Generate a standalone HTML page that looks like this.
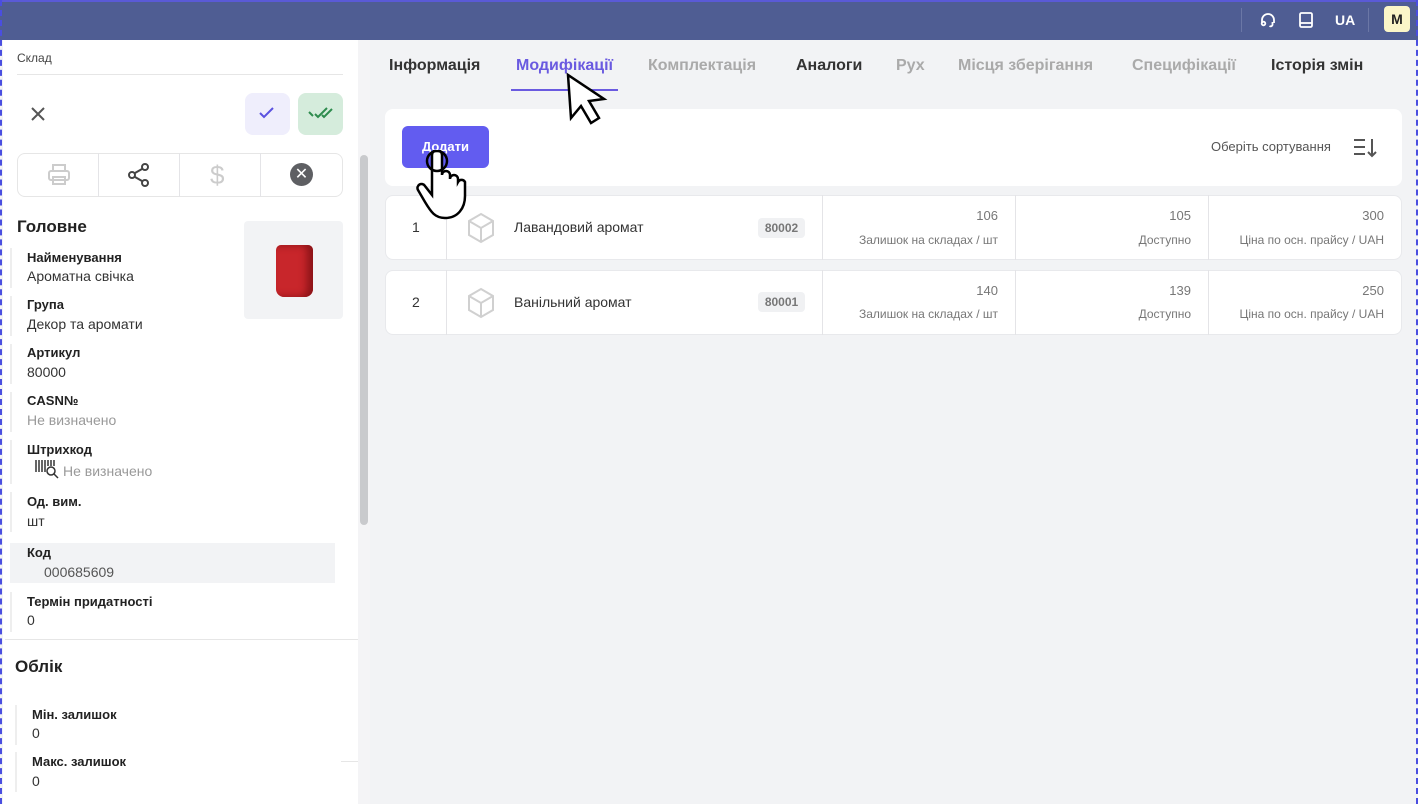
<!DOCTYPE html>
<html><head><meta charset="utf-8"><style>
*{box-sizing:border-box;margin:0;padding:0}
body{width:1418px;height:804px;overflow:hidden;font-family:"Liberation Sans",sans-serif;background:#f2f3f5;position:relative;color:#222}
.abs{position:absolute}
.hdr{left:0;top:0;width:1418px;height:40px;background:#4f5d93;border-top:2px solid #5a5ad6}
.lb{left:0;top:0;width:3px;height:804px;border-left:2px dashed #4a4ee0}
.rb{right:0;top:0;width:3px;height:804px;border-right:2px dashed #4a4ee0}
.side{left:3px;top:40px;width:355px;height:764px;background:#fff}
.sb{left:360px;top:155px;width:8px;height:370px;background:#c9cacd;border-radius:4px}
.sbt{left:358px;top:40px;width:12px;height:764px;background:#f4f4f6}
.lbl{font-size:13px;font-weight:bold;color:#222}
.val{font-size:14px;color:#333}
.g{color:#999}
.tab{top:57px;font-size:16px;font-weight:bold}
.card{background:#fff;border-radius:8px;border:1px solid #e8e9ec}
.num{font-size:13px;color:#777;text-align:right}
.sub{font-size:12px;color:#777;text-align:right}
.vl{width:1px;background:#e4e4e7}
.bar{width:2px;background:#eee}
</style></head><body>
<div class="abs hdr"></div>
<div class="abs" style="left:1241px;top:8px;width:1px;height:24px;background:#6b77a6"></div>
<div class="abs" style="left:1368px;top:8px;width:1px;height:24px;background:#6b77a6"></div>
<svg class="abs" style="left:1259px;top:11px" width="18" height="18" viewBox="0 0 18 18" fill="none" stroke="#fff" stroke-width="1.8"><path d="M3 12V9a6 6 0 0 1 12 0v3"/><circle cx="4.5" cy="12.5" r="1.8"/><path d="M13.5 11v3a2 2 0 0 1-3 1"/></svg>
<svg class="abs" style="left:1298px;top:11px" width="16" height="18" viewBox="0 0 16 18" fill="none" stroke="#fff" stroke-width="1.8"><rect x="2" y="2" width="12" height="14" rx="1.5"/><path d="M2 12h12"/></svg>
<div class="abs" style="left:1335px;top:12px;color:#fff;font-weight:bold;font-size:14px">UA</div>
<div class="abs" style="left:1384px;top:6px;width:26px;height:26px;background:#fbf6c8;border-radius:4px;font-weight:bold;font-size:14px;text-align:center;line-height:26px">M</div>
<div class="abs side"></div>
<div class="abs sbt"></div><div class="abs sb"></div>
<div class="abs" style="left:17px;top:51px;font-size:12px;color:#444">Склад</div>
<div class="abs" style="left:17px;top:74px;width:326px;height:1px;background:#e6e6e6"></div>
<svg class="abs" style="left:30px;top:106px" width="16" height="16" stroke="#555" stroke-width="2"><path d="M2 2l12 12M14 2L2 14"/></svg>
<div class="abs" style="left:245px;top:93px;width:45px;height:42px;background:#efeefc;border-radius:8px"></div>
<svg class="abs" style="left:258px;top:106px" width="18" height="14" fill="none" stroke="#5b52e0" stroke-width="2"><path d="M2 7l4 4 9-9"/></svg>
<div class="abs" style="left:298px;top:93px;width:45px;height:42px;background:#d5ecdc;border-radius:8px"></div>
<svg class="abs" style="left:308px;top:106px" width="26" height="14" fill="none" stroke="#2e8c4e" stroke-width="2"><path d="M1 6l4 4M7 8l3 3 9-9M14 9l2 2 8-8"/></svg>
<div class="abs" style="left:17px;top:153px;width:326px;height:44px;border:1px solid #e6e6e6;border-radius:8px"></div>
<div class="abs vl" style="left:98px;top:153px;height:44px"></div><div class="abs vl" style="left:179px;top:153px;height:44px"></div><div class="abs vl" style="left:260px;top:153px;height:44px"></div>
<svg class="abs" style="left:46px;top:162px" width="26" height="26" fill="none" stroke="#ccc" stroke-width="2"><rect x="7" y="3" width="12" height="6"/><rect x="3" y="9" width="20" height="9" rx="2"/><rect x="7" y="15" width="12" height="7"/></svg>
<svg class="abs" style="left:126px;top:162px" width="26" height="26" fill="none" stroke="#444" stroke-width="2"><circle cx="19" cy="5" r="3"/><circle cx="6" cy="13" r="3"/><circle cx="19" cy="21" r="3"/><path d="M9 11l7-4M9 15l7 4"/></svg>
<div class="abs" style="left:210px;top:160px;font-size:26px;color:#ccc">$</div>
<div class="abs" style="left:290px;top:163px;width:23px;height:23px;border-radius:50%;background:#5e5f63;color:#fff;text-align:center;line-height:23px;font-size:16px">✕</div>
<div class="abs" style="left:17px;top:217px;font-size:17px;font-weight:bold">Головне</div>
<div class="abs" style="left:244px;top:221px;width:99px;height:98px;background:#f2f3f5;border-radius:4px"></div>
<div class="abs" style="left:276px;top:245px;width:37px;height:52px;background:#c8262b;border-radius:5px 5px 8px 8px;box-shadow:inset -6px 0 8px #8c1418"></div>
<div class="abs bar" style="left:10px;top:248px;height:40px"></div>
<div class="abs bar" style="left:10px;top:296px;height:40px"></div>
<div class="abs bar" style="left:10px;top:344px;height:40px"></div>
<div class="abs bar" style="left:10px;top:392px;height:40px"></div>
<div class="abs bar" style="left:10px;top:440px;height:44px"></div>
<div class="abs bar" style="left:10px;top:492px;height:40px"></div>
<div class="abs bar" style="left:10px;top:592px;height:40px"></div>
<div class="abs bar" style="left:15px;top:705px;height:40px"></div>
<div class="abs bar" style="left:15px;top:752px;height:40px"></div>
<div class="abs lbl" style="left:27px;top:250px">Найменування</div><div class="abs val" style="left:27px;top:268px">Ароматна свічка</div>
<div class="abs lbl" style="left:27px;top:297px">Група</div><div class="abs val" style="left:27px;top:316px">Декор та аромати</div>
<div class="abs lbl" style="left:27px;top:345px">Артикул</div><div class="abs val" style="left:27px;top:364px">80000</div>
<div class="abs lbl" style="left:27px;top:393px">CASN№</div><div class="abs val g" style="left:27px;top:412px">Не визначено</div>
<div class="abs lbl" style="left:27px;top:442px">Штрихкод</div>
<svg class="abs" style="left:35px;top:459px" width="28" height="22" fill="none" stroke="#333" stroke-width="1.5"><path d="M1 1v12M4 1v12M7 1v12M10 1v12M13 1v6M16 1v6M19 1v6"/><circle cx="16" cy="12" r="4"/><path d="M19 15l4 4"/></svg>
<div class="abs val g" style="left:63px;top:463px">Не визначено</div>
<div class="abs lbl" style="left:27px;top:494px">Од. вим.</div><div class="abs val" style="left:27px;top:513px">шт</div>
<div class="abs" style="left:10px;top:543px;width:325px;height:40px;background:#f2f3f5"></div>
<div class="abs lbl" style="left:27px;top:545px">Код</div><div class="abs val" style="left:44px;top:564px;color:#555">000685609</div>
<div class="abs lbl" style="left:27px;top:594px">Термін придатності</div><div class="abs val" style="left:27px;top:612px">0</div>
<div class="abs" style="left:5px;top:639px;width:353px;height:1px;background:#e6e6e6"></div>
<div class="abs" style="left:15px;top:657px;font-size:17px;font-weight:bold">Облік</div>
<div class="abs lbl" style="left:32px;top:707px">Мін. залишок</div><div class="abs val" style="left:32px;top:725px">0</div>
<div class="abs lbl" style="left:32px;top:754px">Макс. залишок</div><div class="abs val" style="left:32px;top:773px">0</div>
<div class="abs" style="left:341px;top:761px;width:17px;height:1px;background:#e6e6e6"></div>
<div class="abs tab" style="left:389px;color:#333">Інформація</div>
<div class="abs tab" style="left:516px;color:#6a5ae0">Модифікації</div>
<div class="abs" style="left:511px;top:89px;width:107px;height:2px;background:#6a5ae0"></div>
<div class="abs tab" style="left:648px;color:#aaa">Комплектація</div>
<div class="abs tab" style="left:796px;color:#333">Аналоги</div>
<div class="abs tab" style="left:896px;color:#aaa">Рух</div>
<div class="abs tab" style="left:958px;color:#aaa">Місця зберігання</div>
<div class="abs tab" style="left:1132px;color:#aaa">Специфікації</div>
<div class="abs tab" style="left:1271px;color:#333">Історія змін</div>
<div class="abs card" style="left:385px;top:109px;width:1017px;height:77px;border:none"></div>
<div class="abs" style="left:402px;top:126px;width:87px;height:42px;background:#625cf0;border-radius:6px;color:#fff;font-size:13px;font-weight:bold;text-align:center;line-height:42px">Додати</div>
<div class="abs" style="left:1211px;top:139px;font-size:13px;color:#555">Оберіть сортування</div>
<svg class="abs" style="left:1353px;top:137px" width="24" height="22" stroke="#555" stroke-width="2"><path d="M1 3h11M1 10h11M1 17h11M19 2v17M15 15l4 4 4-4" fill="none"/></svg>
<div class="abs card" style="left:385px;top:195px;width:1017px;height:65px"></div>
<div class="abs card" style="left:385px;top:270px;width:1017px;height:65px"></div>
<div class="abs vl" style="left:446px;top:195px;height:65px"></div><div class="abs vl" style="left:822px;top:195px;height:65px"></div><div class="abs vl" style="left:1015px;top:195px;height:65px"></div><div class="abs vl" style="left:1208px;top:195px;height:65px"></div>
<div class="abs vl" style="left:446px;top:270px;height:65px"></div><div class="abs vl" style="left:822px;top:270px;height:65px"></div><div class="abs vl" style="left:1015px;top:270px;height:65px"></div><div class="abs vl" style="left:1208px;top:270px;height:65px"></div>
<div class="abs val" style="left:412px;top:219px">1</div><div class="abs val" style="left:412px;top:294px">2</div>
<svg class="abs" style="left:466px;top:212px" width="30" height="32" fill="none" stroke="#d0d0d0" stroke-width="2"><path d="M15 2l12 7v14l-12 7-12-7V9z M3 9l12 7 12-7M15 16v14"/></svg>
<svg class="abs" style="left:466px;top:287px" width="30" height="32" fill="none" stroke="#d0d0d0" stroke-width="2"><path d="M15 2l12 7v14l-12 7-12-7V9z M3 9l12 7 12-7M15 16v14"/></svg>
<div class="abs val" style="left:514px;top:219px">Лавандовий аромат</div><div class="abs val" style="left:514px;top:294px">Ванільний аромат</div>
<div class="abs" style="left:758px;top:218px;width:47px;height:20px;background:#f0f1f3;border-radius:4px;font-size:12px;font-weight:bold;color:#777;text-align:center;line-height:20px">80002</div>
<div class="abs" style="left:758px;top:292px;width:47px;height:20px;background:#f0f1f3;border-radius:4px;font-size:12px;font-weight:bold;color:#777;text-align:center;line-height:20px">80001</div>
<div class="abs num" style="left:830px;top:208px;width:168px">106</div><div class="abs sub" style="left:830px;top:233px;width:168px">Залишок на складах / шт</div>
<div class="abs num" style="left:1023px;top:208px;width:168px">105</div><div class="abs sub" style="left:1023px;top:233px;width:168px">Доступно</div>
<div class="abs num" style="left:1216px;top:208px;width:168px">300</div><div class="abs sub" style="left:1210px;top:233px;width:174px">Ціна по осн. прайсу / UAH</div>
<div class="abs num" style="left:830px;top:283px;width:168px">140</div><div class="abs sub" style="left:830px;top:307px;width:168px">Залишок на складах / шт</div>
<div class="abs num" style="left:1023px;top:283px;width:168px">139</div><div class="abs sub" style="left:1023px;top:307px;width:168px">Доступно</div>
<div class="abs num" style="left:1216px;top:283px;width:168px">250</div><div class="abs sub" style="left:1210px;top:307px;width:174px">Ціна по осн. прайсу / UAH</div>
<svg class="abs" style="left:565px;top:72px" width="50" height="54" fill="#fff" stroke="#000" stroke-width="2.5"><path d="M3 3l3 43 10-12 10 17 8-5-10-17 15-2z"/></svg>
<svg class="abs" style="left:412px;top:150px" width="58" height="72" fill="#fff" stroke="#000" stroke-width="2.5"><path d="M20 5a5 5 0 0 1 10 0v20a4 4 0 0 1 8 0v4a4 4 0 0 1 8 0v3a4 4 0 0 1 7 0v14c0 12-7 22-20 22c-10 0-14-6-20-16l-7-12a4 4 0 0 1 7-4l7 9z"/><circle cx="25" cy="11" r="10" fill="none" stroke-width="2.5"/></svg>
<div class="abs lb"></div><div class="abs rb"></div>
</body></html>
